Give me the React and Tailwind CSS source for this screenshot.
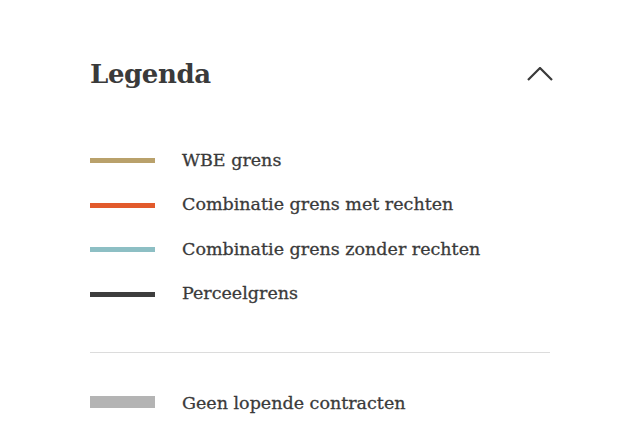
export default function App() {
  const rows = [
    { label: "WBE grens", color: "bg-[#b9a16b]" },
    { label: "Combinatie grens met rechten", color: "bg-[#e25a2c]" },
    { label: "Combinatie grens zonder rechten", color: "bg-[#8dbfc4]" },
    { label: "Perceelgrens", color: "bg-[#3d3d3d]" },
  ];
  return (
    <div className="w-[640px] h-[440px] bg-white overflow-hidden font-['DejaVu_Serif',serif] text-[#3a3a3a]">
      <div className="ml-[90px] w-[460px] pt-[54px]">
        <div className="flex items-center justify-between h-[40px]">
          <h2 className="text-[26px] font-bold leading-none tracking-[-0.4px]">Legenda</h2>
          <svg width="26" height="14" viewBox="0 0 26 14" className="mr-[-3px]">
            <path d="M1 13 L13 1 L25 13" fill="none" stroke="#3a3a3a" strokeWidth="2.2" />
          </svg>
        </div>
        <div className="mt-[44.25px]">
          {rows.map((r) => (
            <div key={r.label} className="flex items-center h-[44.5px]">
              <div className={`w-[65px] h-[5px] ${r.color}`} />
              <span className="ml-[27px] text-[17.5px] leading-none [-webkit-text-stroke:0.3px_#3a3a3a]">{r.label}</span>
            </div>
          ))}
        </div>
        <div className="mt-[35.75px] h-px bg-[#dcdcdc]" />
        <div className="mt-[27px] flex items-center h-[44.5px]">
          <div className="w-[65px] h-[12px] bg-[#b4b4b4]" />
          <span className="ml-[27px] text-[17.5px] leading-none mt-[3px] [-webkit-text-stroke:0.3px_#3a3a3a]">Geen lopende contracten</span>
        </div>
      </div>
    </div>
  );
}
